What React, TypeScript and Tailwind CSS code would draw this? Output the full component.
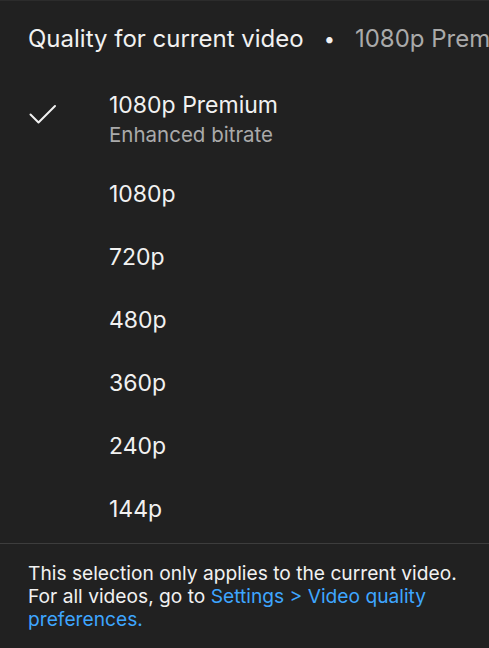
import React from "react";

const options = ["1080p", "720p", "480p", "360p", "240p", "144p"];

export default function App() {
  return (
    <div
      className="w-[489px] h-[648px] bg-[#212121] text-[#f1f1f1] overflow-hidden flex flex-col border-t border-[#2c2c2c]"
      style={{ fontFamily: "Inter, 'Noto Sans', sans-serif" }}
    >
      <div className="flex items-center whitespace-nowrap pl-[28px] pt-[16px] h-[60px] text-[24px]">
        <span className="text-[#f1f1f1]">Quality for current video</span>
        <span className="mx-[20px] text-[#f1f1f1] text-[20px]">•</span>
        <span className="text-[#aaaaaa]">1080p Premium</span>
      </div>

      <div className="flex flex-col pt-[29px]">
        <div className="flex items-start h-[73px]">
          <div className="w-[109px] pl-[29px] pt-[12px]">
            <svg width="28" height="24" viewBox="0 0 28 24" fill="none">
              <path d="M1.5 12.5 L9.5 20.5 L26 4" stroke="#f1f1f1" strokeWidth="2" strokeLinecap="round" strokeLinejoin="round" />
            </svg>
          </div>
          <div className="flex flex-col">
            <span className="text-[23px] leading-[30px]">1080p Premium</span>
            <span className="text-[20.5px] leading-[30px] text-[#aaaaaa]">Enhanced bitrate</span>
          </div>
        </div>
        {options.map((o) => (
          <div key={o} className="flex items-center h-[63px] pl-[109px] text-[23px]">
            {o}
          </div>
        ))}
      </div>

      <div className="mt-[2px] border-t border-[#3d3d3d]" />
      <div className="pl-[28px] pr-[24px] pt-[18px] text-[19.2px] leading-[23px] text-[#f1f1f1]">
        This selection only applies to the current video.
        <br />
        For all videos, go to{" "}
        <span className="text-[#3ea6ff]">Settings &gt; Video quality preferences.</span>
      </div>
    </div>
  );
}
